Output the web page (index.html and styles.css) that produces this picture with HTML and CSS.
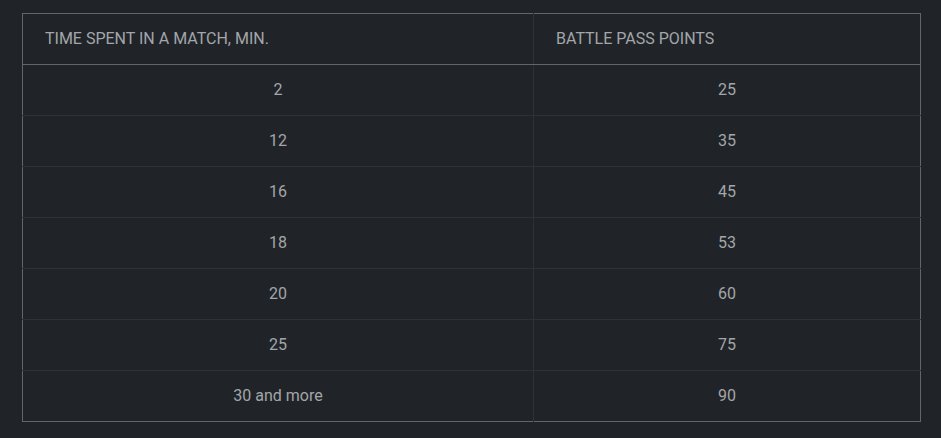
FILE: index.html
```html
<!DOCTYPE html>
<html>
<head>
<meta charset="utf-8">
<link rel="stylesheet" href="styles.css">
</head>
<body>
<div class="wrap">
  <table class="points">
    <thead>
      <tr><th>TIME SPENT IN A MATCH, MIN.</th><th>BATTLE PASS POINTS</th></tr>
    </thead>
    <tbody>
      <tr><td>2</td><td>25</td></tr>
      <tr><td>12</td><td>35</td></tr>
      <tr><td>16</td><td>45</td></tr>
      <tr><td>18</td><td>53</td></tr>
      <tr><td>20</td><td>60</td></tr>
      <tr><td>25</td><td>75</td></tr>
      <tr><td>30 and more</td><td>90</td></tr>
    </tbody>
  </table>
</div>
</body>
</html>
```
FILE: styles.css
```css
html, body {
  margin: 0;
  padding: 0;
  background: #202428;
}
.wrap {
  padding: 13px 0 0 22px;
}
.points {
  width: 899px;
  border-collapse: collapse;
  border: 1px solid #62666a;
  font-family: Roboto, "Liberation Sans", sans-serif;
  font-size: 16px;
  line-height: 19px;
  color: #a3a6aa;
  table-layout: fixed;
}
.points th {
  height: 48px;
  padding: 0 0 2px 22px;
  text-align: left;
  font-weight: 400;
  border-bottom: 1px solid #62666a;
  border-right: 1px solid #2e3237;
}
.points th:first-child { width: 488px; }
.points td {
  height: 48px;
  padding: 0 0 2px 0;
  text-align: center;
  border-top: 1px solid #2e3237;
  border-right: 1px solid #2e3237;
}
.points tr:first-child td { border-top: none; }
.points td:last-child, .points th:last-child { border-right: none; }
```
